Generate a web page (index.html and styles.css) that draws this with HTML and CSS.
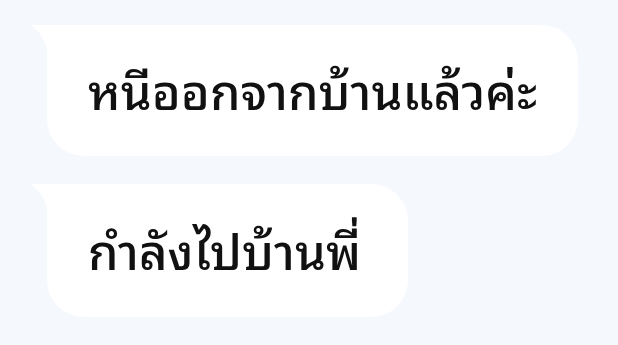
FILE: index.html
```html
<!DOCTYPE html>
<html lang="th">
<head>
<meta charset="utf-8">
<link rel="stylesheet" href="styles.css">
</head>
<body>
<div class="chat">
  <div class="bubble bubble-long">
    <svg class="tail" width="20" height="36" viewBox="0 0 20 36"><path d="M0 0 H20 V36 C17 16 9 5 0 0 Z" fill="#fff"/></svg>
    <span class="msg">หนีออกจากบ้านแล้วค่ะ</span>
  </div>
  <div class="bubble bubble-short">
    <svg class="tail" width="20" height="36" viewBox="0 0 20 36"><path d="M0 0 H20 V36 C17 16 9 5 0 0 Z" fill="#fff"/></svg>
    <span class="msg">กำลังไปบ้านพี่</span>
  </div>
</div>
</body>
</html>
```
FILE: styles.css
```css
html, body {
  margin: 0;
  padding: 0;
  background: #f5f8fc;
  width: 618px;
  height: 345px;
  overflow: hidden;
}
.chat {
  display: flex;
  flex-direction: column;
  align-items: flex-start;
  gap: 28px;
  padding: 25px 0 0 47px;
}
.bubble {
  position: relative;
  background: #ffffff;
  border-radius: 2px 37px 37px 37px;
  height: 131px;
  padding: 0 0 5px 41px;
  display: flex;
  align-items: center;
  box-sizing: border-box;
}
.bubble-long { width: 531px; }
.bubble-short { width: 361px; height: 133px; }
.tail {
  position: absolute;
  left: -17px;
  top: 0;
}
.msg {
  font-family: "Noto Sans Thai Looped", "Loma", sans-serif;
  font-size: 49px;
  font-weight: 500;
  color: #111;
  line-height: 1;
  white-space: nowrap;
}
```
